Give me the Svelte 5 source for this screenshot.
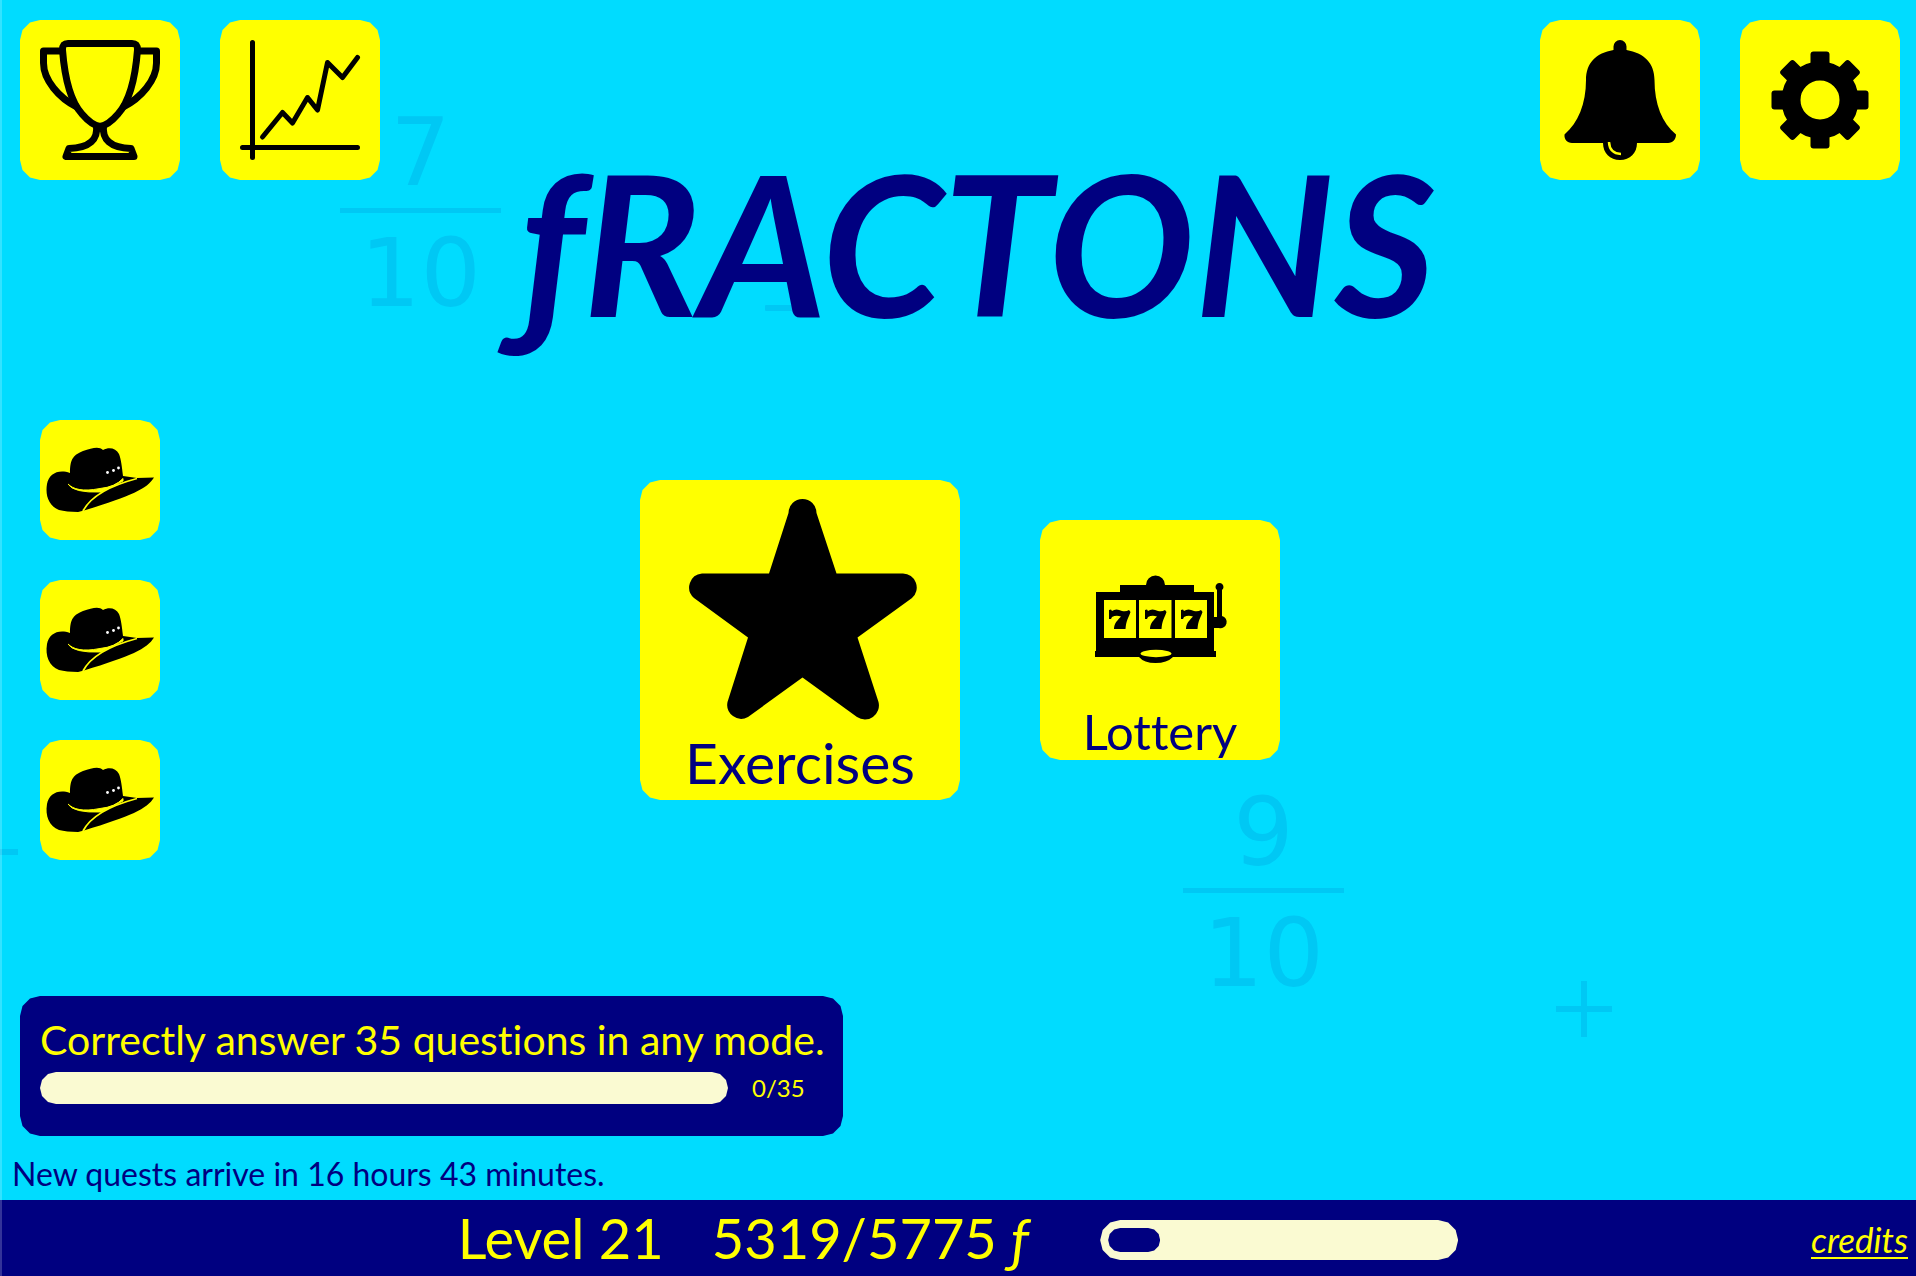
<script lang="ts">
  const hats = [1, 2, 3];
  const fractions = [
    { top: '7', bottom: '10', name: 'seven-tenths' },
    { top: '9', bottom: '10', name: 'nine-tenths' },
  ];
  const level = 21;
  const points = 5319;
  const target = 5775;
  const quest = { text: 'Correctly answer 35 questions in any mode.', done: 0, total: 35 };
</script>

<div class="game">
  <div class="backdrop" aria-hidden="true">
    {#each fractions as f}
      <div class="fraction {f.name}">
        <span class="numerator">{f.top}</span>
        <span>{f.bottom}</span>
      </div>
    {/each}
    <svg class="sign minus-title" viewBox="0 0 32 6"><rect width="32" height="6" rx="1" /></svg>
    <svg class="sign minus-edge" viewBox="0 0 18 6"><rect width="18" height="6" /></svg>
    <svg class="sign plus" viewBox="0 0 56 56"><path d="M25 0h6v25h25v6H31v25h-6V31H0v-6h25z" /></svg>
  </div>

  <header>
    <nav class="group" aria-label="Progress">
      <button class="tile" aria-label="Achievements">
        <svg viewBox="0 0 160 160" fill="none" stroke="#000" stroke-width="7" stroke-linejoin="round">
          <path d="M42.500 30C42.500 25 43.500 23.500 48 23.500H112C116.500 23.500 117.500 25 117.500 30C115 62 108 83 98 94C92 101 86 105.500 80 106.500C74 105.500 68 101 62 94C52 83 45 62 42.500 30Z" />
          <path d="M42 31H23.500V43C23.500 60 39 78 57 87M118 31H136.500V43C136.500 60 121 78 103 87" />
          <path d="M76.500 106C78 119 70 128 49 128.500L46 136.500H114L111 128.500C90 128 82 119 83.500 106" />
        </svg>
      </button>
      <button class="tile" aria-label="Statistics">
        <svg viewBox="0 0 160 160" fill="none" stroke="#000" stroke-width="5" stroke-linecap="round" stroke-linejoin="round">
          <path d="M32.500 22.500V137.500M22.500 127.500H137.500" />
          <path d="M42.500 117L62.500 92.500L72.500 103L87.500 77.500L97.500 90L107.500 42.500L122.500 57.500L137.500 37.500" />
        </svg>
      </button>
    </nav>
    <nav class="group" aria-label="Options">
      <button class="tile" aria-label="Notifications">
        <svg viewBox="0 0 160 160">
          <path d="M73.500 30V26.500a6.500 6.500 0 0 1 13 0V30C104 33 114.500 43 114.500 60C114.500 84 122 103 136 114.500C136 119 133 123 128 123H97C97 133 90 140 80 140S63 133 63 123H32C27 123 24 119 24.500 114.500C38 103 46 84 46 60C46 43 56 33 73.500 30Z" />
          <path d="M69 122Q69.500 133.500 81 134" fill="none" stroke="#ff0" stroke-width="2.500" />
        </svg>
      </button>
      <button class="tile" aria-label="Settings">
        <svg viewBox="0 0 160 160">
          <circle cx="80" cy="80" r="29" fill="none" stroke="#000" stroke-width="19" />
          {#each [0, 45, 90, 135, 180, 225, 270, 315] as angle}
            <rect x="70.500" y="31.500" width="19" height="18" rx="3" transform="rotate({angle} 80 80)" />
          {/each}
        </svg>
      </button>
    </nav>
  </header>

  <h1>ƒRACTONS</h1>

  <main>
    <aside>
      {#each hats as hat}
        <button class="tile small" aria-label="Hat quest {hat}">
          <svg viewBox="0 0 120 120">
            <path d="M30 53C30 38 34 35 43 31C52 28 59 26 63 30C69 27 76 28 79 34C81 39 82 47 83 56L97 58L114 57.500C107 69 91 76 44 90.500L38 92C30 92 24 91 19 90C9 86 5 76 7 64C9 54 18 49 30 53Z" />
            <path d="M28 64Q33 73 61 72L83 61L83 58.500Q75 67 60 68.500C42 72 33 69 28 64Z" fill="#ff0" stroke="#ff0" />
            <path d="M43 91Q54 70 97 58.500" fill="none" stroke="#ff0" stroke-width="1.800" />
            <g fill="#fff"><circle cx="67.500" cy="52.500" r="1.400" /><circle cx="73.500" cy="50.500" r="1.400" /><circle cx="78.500" cy="48" r="1.400" /></g>
          </svg>
        </button>
      {/each}
    </aside>

    <div class="modes">
      <button class="tile exercises">
        <svg viewBox="0 0 320 240">
          <path d="M148.500 33A14 14 0 0 1 176.500 33L196.500 93.500H263A14 14 0 0 1 272 118L217.500 157.500L238.500 222A14 14 0 0 1 217 237L162.500 197.500L108 237A14 14 0 0 1 87.500 222L108 157.500L54 118A14 14 0 0 1 62 93.500H129Z" />
        </svg>
        <span>Exercises</span>
      </button>
      <button class="tile lottery">
        <svg viewBox="0 0 240 180">
          <path d="M56 72H80V65H106A9.500 9.500 0 0 1 125 65H154V72H174V97H177V70A4 4 0 1 1 182 70V96A6 6 0 0 1 179 108H174V131H176V137H133Q127 143 115.500 143T99 137H55V131H56Z" />
          <path fill="#ff0" d="M64 80H96V118H64ZM99 80H131.500V118H99ZM135 80H167V118H135Z" />
          <ellipse cx="116" cy="133.500" rx="15.500" ry="3.700" fill="#ff0" />
          {#each [0, 36, 72] as x}
            <path transform="translate({x} 0)" d="M69 90L71 89.500L72 91Q76 88 82 91Q86 92 89 90L90.500 92C89 97 86 100 85.500 109H74C74 103 78 100 81 96.500Q76 95 72 97L71 99H69Z" />
          {/each}
        </svg>
        <span>Lottery</span>
      </button>
    </div>
  </main>

  <section class="quests">
    <div class="quest">
      <label for="quest-progress">{quest.text}</label>
      <div class="quest-row">
        <div class="bar quest-bar" id="quest-progress" role="progressbar" aria-label="Quest progress" aria-valuenow={quest.done} aria-valuemax={quest.total}></div>
        <span>{quest.done}/{quest.total}</span>
      </div>
    </div>
    <p>New quests arrive in 16 hours 43 minutes.</p>
  </section>

  <footer>
    <div></div>
    <div class="status">
      <span>Level {level}</span>
      <span>{points}/{target} <i>ƒ</i></span>
      <div class="bar level-bar" role="progressbar" aria-label="Level progress" aria-valuenow={points} aria-valuemax={target}>
        <div class="fill"></div>
      </div>
    </div>
    <a href="#credits">credits</a>
  </footer>
</div>

<style>
  :global(body) { background: #00dcff; }
  .game {
    --cut: 20px;
    position: relative;
    display: flex;
    flex-direction: column;
    min-height: 100vh;
    overflow: hidden;
    background: #00dcff;
    color: #000080;
    font-family: "Trebuchet MS", Lato, "Noto Sans", sans-serif;
    font-variant-ligatures: none;
  }
  .game::after {
    content: "";
    position: absolute;
    inset: 0 auto 0 0;
    width: 2px;
    background: rgb(255 255 255 / 0.2);
  }
  .backdrop {
    position: absolute;
    inset: 0;
    color: #00c8f4;
    font: 95px/120px "DejaVu Sans", sans-serif;
  }
  .fraction {
    position: absolute;
    display: grid;
    width: 161px;
    text-align: center;
  }
  .numerator { border-bottom: 5px solid #00c8f4; line-height: 112px; padding-top: 8px; }
  .seven-tenths { left: 340px; top: 88px; }
  .nine-tenths { left: 1183px; top: 768px; }
  .sign { position: absolute; fill: #00c8f4; }
  .minus-title { left: 765px; top: 305px; width: 32px; }
  .minus-edge { left: 0; top: 849px; width: 18px; }
  .plus { left: 1556px; top: 981px; width: 56px; }
  header {
    position: relative;
    display: flex;
    justify-content: space-between;
    padding: 20px 16px 0 20px;
  }
  .group { display: flex; gap: 40px; }
  .tile {
    display: flex;
    flex-direction: column;
    align-items: center;
    justify-content: flex-start;
    width: 160px;
    height: 160px;
    padding: 0;
    border: 0;
    background: #ff0;
    color: inherit;
    font-family: inherit;
    font-variant-ligatures: inherit;
    cursor: pointer;
  }
  .tile, .bar, .quest, .fill {
    --near: calc(var(--cut) / 8);
    --mid: calc(var(--cut) / 2);
    clip-path: polygon(
      0 var(--cut), var(--near) var(--mid), var(--mid) var(--near), var(--cut) 0,
      calc(100% - var(--cut)) 0, calc(100% - var(--mid)) var(--near), calc(100% - var(--near)) var(--mid), 100% var(--cut),
      100% calc(100% - var(--cut)), calc(100% - var(--near)) calc(100% - var(--mid)), calc(100% - var(--mid)) calc(100% - var(--near)), calc(100% - var(--cut)) 100%,
      var(--cut) 100%, var(--mid) calc(100% - var(--near)), var(--near) calc(100% - var(--mid)), 0 calc(100% - var(--cut))
    );
  }
  .tile svg { display: block; flex: none; width: 100%; }
  h1 {
    position: relative;
    margin: 0 0 116px;
    padding-left: 40px;
    text-align: center;
    font-size: 195px;
    line-height: 124px;
    font-style: italic;
    font-weight: 700;
  }
  main {
    position: relative;
    display: grid;
    grid-template-columns: 1fr auto 1fr;
    align-items: start;
    padding-left: 4px;
  }
  aside { display: grid; gap: 40px; padding-left: 36px; }
  .small { width: 120px; height: 120px; }
  .modes { display: flex; align-items: center; gap: 80px; padding-top: 60px; }
  .exercises { width: 320px; height: 320px; font-size: 57px; line-height: 84px; }
  .lottery { width: 240px; height: 240px; font-size: 49px; line-height: 62px; }
  .quests { position: relative; margin-top: auto; }
  .quest {
    box-sizing: border-box;
    width: 823px;
    max-width: 100%;
    height: 140px;
    margin-left: 20px;
    padding: 20px;
    background: #000080;
    color: #ff0;
    font-size: 41px;
    line-height: 48px;
  }
  label { display: block; white-space: nowrap; }
  .quest-row { display: flex; align-items: center; gap: 24px; margin-top: 8px; font-size: 24px; line-height: 32px; }
  .bar { --cut: 16px; background: #fafad2; }
  .quest-bar { width: 688px; height: 32px; }
  p { margin: 16px 0 4px 12px; font-size: 32px; line-height: 44px; }
  footer {
    position: relative;
    display: grid;
    grid-template-columns: 1fr auto 1fr;
    align-items: center;
    box-sizing: border-box;
    height: 76px;
    padding: 4px 8px 0;
    background: #000080;
    color: #ff0;
    font-size: 56px;
    line-height: 68px;
    white-space: nowrap;
  }
  .status { display: flex; align-items: center; gap: 48px; }
  .status span { padding-bottom: 4px; }
  .level-bar { --cut: 20px; box-sizing: border-box; width: 358px; height: 40px; padding: 8px; margin-left: 24px; }
  .fill { --cut: 12px; width: 52px; height: 24px; background: #000080; }
  a { justify-self: end; color: inherit; font-size: 35px; line-height: 36px; font-style: italic; text-decoration: none; border-bottom: 2px solid; }
</style>
